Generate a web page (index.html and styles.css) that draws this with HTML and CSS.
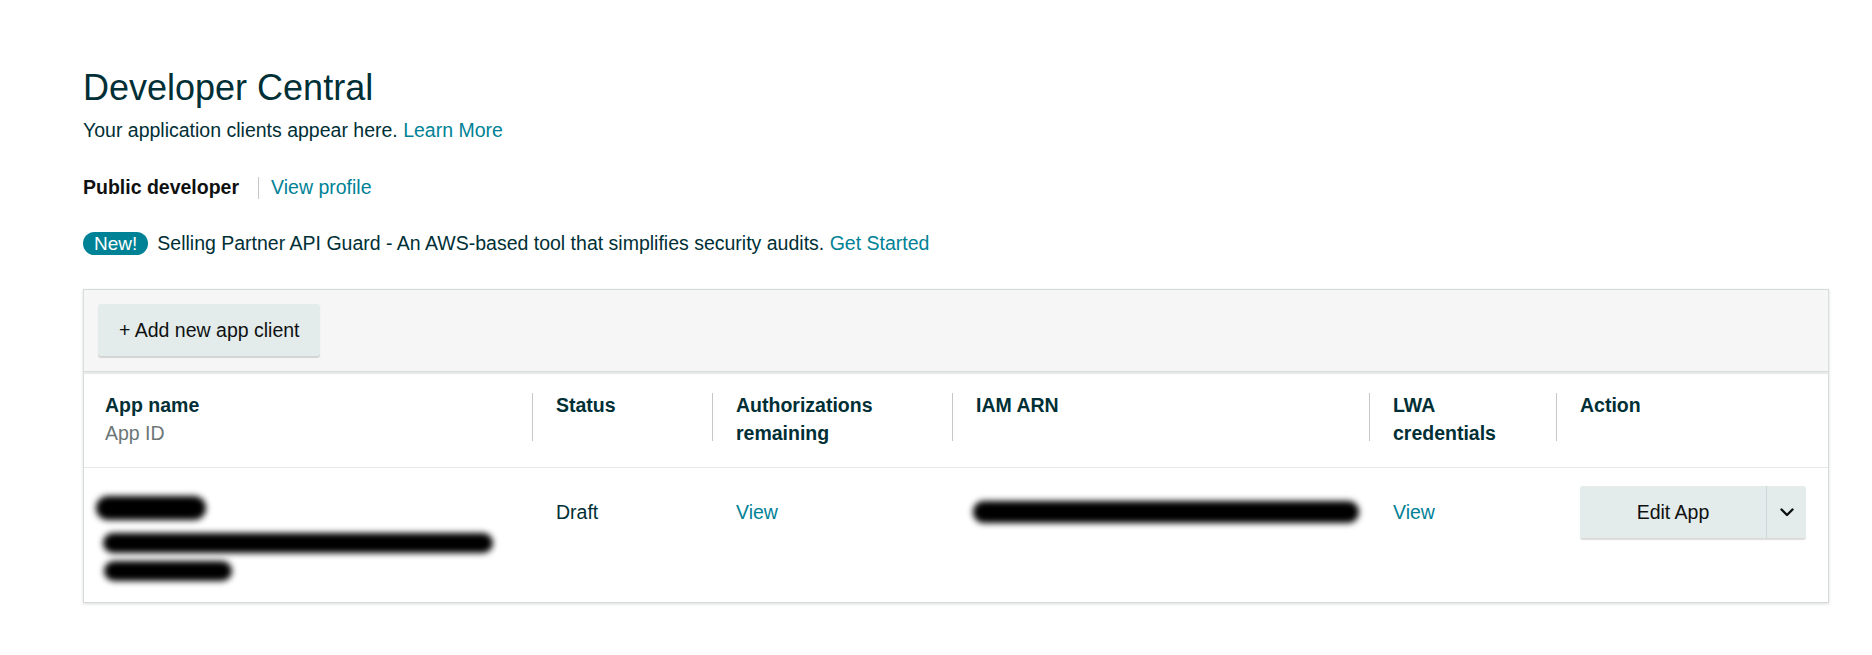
FILE: index.html
```html
<!DOCTYPE html>
<html lang="en">
<head>
<meta charset="utf-8">
<title>Developer Central</title>
<link rel="stylesheet" href="styles.css">
</head>
<body>
<main class="page">
  <h1 class="title">Developer Central</h1>
  <p class="intro">Your application clients appear here. <a class="link" href="#">Learn More</a></p>
  <div class="profile">
    <span class="dev-type">Public developer</span>
    <span class="divider"></span>
    <a class="link" href="#">View profile</a>
  </div>
  <div class="notice">
    <span class="badge">New!</span>
    <span class="notice-text">Selling Partner API Guard - An AWS-based tool that simplifies security audits. <a class="link" href="#">Get Started</a></span>
  </div>

  <section class="card">
    <div class="toolbar">
      <button class="btn btn-add" type="button">+ Add new app client</button>
    </div>
    <div class="table">
      <div class="row head">
        <div class="cell c-name"><div class="th">App name</div><div class="sub">App ID</div></div>
        <div class="cell sep"><div class="th">Status</div></div>
        <div class="cell sep"><div class="th">Authorizations<br>remaining</div></div>
        <div class="cell sep"><div class="th">IAM ARN</div></div>
        <div class="cell sep"><div class="th">LWA<br>credentials</div></div>
        <div class="cell sep"><div class="th">Action</div></div>
      </div>
      <div class="row body">
        <div class="cell c-name">
          <div class="redact r1"></div>
          <div class="redact r2"></div>
          <div class="redact r3"></div>
        </div>
        <div class="cell"><div class="td">Draft</div></div>
        <div class="cell"><div class="td"><a class="link" href="#">View</a></div></div>
        <div class="cell"><div class="redact r-arn"></div></div>
        <div class="cell"><div class="td"><a class="link" href="#">View</a></div></div>
        <div class="cell">
          <div class="split-btn">
            <button class="btn btn-edit" type="button">Edit App</button>
            <button class="btn btn-caret" type="button" aria-label="More actions">
              <svg width="14" height="9" viewBox="0 0 14 9"><polyline points="1.5,1.5 7,7 12.5,1.5" fill="none" stroke="#0f1111" stroke-width="2.4" stroke-linecap="round" stroke-linejoin="round"/></svg>
            </button>
          </div>
        </div>
      </div>
    </div>
  </section>
</main>
</body>
</html>
```

FILE: styles.css
```css
* { box-sizing: border-box; }

html, body {
  margin: 0;
  padding: 0;
  background: #ffffff;
}

body {
  font-family: "Liberation Sans", Arial, sans-serif;
  font-size: 19.5px;
  line-height: 27px;
  color: #002f36;
}

.page {
  width: 1746px;
  margin-left: 83px;
  padding-top: 66px;
  padding-bottom: 40px;
}

.title {
  margin: 0;
  font-size: 36px;
  line-height: 44px;
  font-weight: normal;
  color: #002f36;
}

.intro {
  margin: 7px 0 0;
}

.link {
  color: #008296;
  text-decoration: none;
}

.profile {
  margin-top: 30px;
  display: flex;
  align-items: center;
  height: 27px;
}

.dev-type {
  font-weight: bold;
  color: #0f1111;
}

.divider {
  width: 1px;
  height: 22px;
  background: #c4c8c8;
  margin: 0 12px 0 19px;
}

.notice {
  margin-top: 29px;
  display: flex;
  align-items: center;
  height: 27px;
}

.badge {
  display: inline-flex;
  align-items: center;
  height: 23px;
  padding: 0 11px;
  margin-right: 9px;
  border-radius: 12px;
  background: #008296;
  color: #ffffff;
  font-size: 19px;
  line-height: 23px;
}

.notice-text { color: #002f36; }

.card {
  margin-top: 32px;
  border: 1px solid #d5dbdb;
  background: #ffffff;
  box-shadow: 0 1px 3px rgba(0, 0, 0, 0.14);
}

.toolbar {
  background: #f6f6f6;
  padding: 14px 14px 15px;
  border-bottom: 1px solid #d9dcdc;
  box-shadow: 0 2px 1px #e9eaea;
  margin-bottom: 2px;
}

.btn {
  font-family: inherit;
  font-size: 19.5px;
  color: #0f1111;
  background: #e3ebeb;
  border: 0;
  border-radius: 3px;
  cursor: pointer;
}

.btn-add {
  height: 52px;
  padding: 0 20px 0 21px;
  box-shadow: 0 2px 1px rgba(0, 0, 0, 0.14);
}

.row {
  display: grid;
  grid-template-columns: 448px 180px 240px 417px 187px 1fr;
}

.row.head {
  padding: 17px 0 20px;
  border-bottom: 1px solid #e6e8e8;
}

.row.body {
  padding: 18px 0 21px;
}

.cell {
  padding: 0 22px 0 24px;
  min-width: 0;
}

.cell.c-name {
  padding-left: 21px;
}

.cell.sep {
  background-image: linear-gradient(#c4c8c8, #c4c8c8);
  background-size: 1px 48px;
  background-repeat: no-repeat;
  background-position: left 2px;
}

.th {
  font-weight: bold;
  line-height: 28px;
  color: #002f36;
}

.sub {
  line-height: 28px;
  color: #6c7778;
}

.td {
  padding-top: 13px;
  color: #002f36;
}

.redact {
  background: #000000;
  border-radius: 12px;
  filter: blur(3.2px);
}

.r1 { margin: 10px 0 0 -9px; width: 110px; height: 24px; }
.r2 { margin: 13px 0 0 -2px; width: 390px; height: 20px; }
.r3 { margin: 8px 0 0 -1px; width: 128px; height: 20px; }
.r-arn { margin-top: 15px; margin-left: -3px; width: 386px; height: 22px; }

.split-btn {
  display: flex;
  width: 226px;
  height: 52px;
  border-radius: 3px;
  box-shadow: 0 2px 1px rgba(0, 0, 0, 0.14);
}

.btn-edit {
  width: 187px;
  height: 52px;
  border-radius: 3px 0 0 3px;
  border-right: 1px solid #cfd8d8;
}

.btn-caret {
  width: 39px;
  height: 52px;
  border-radius: 0 3px 3px 0;
  display: flex;
  align-items: center;
  justify-content: center;
  padding: 0;
}
```
